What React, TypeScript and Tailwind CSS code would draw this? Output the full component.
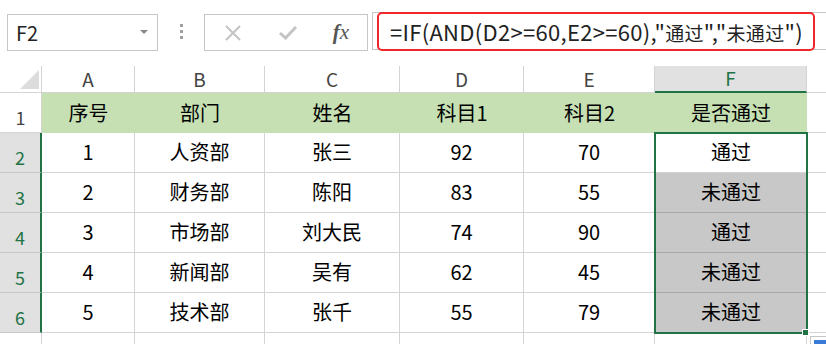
import React from 'react';

const FONT = { fontFamily: '"Noto Sans CJK SC", "Liberation Sans", sans-serif' };

const COLUMNS = ['A', 'B', 'C', 'D', 'E', 'F'];

const HEADER_ROW = ['序号', '部门', '姓名', '科目1', '科目2', '是否通过'];

const DATA_ROWS = [
  ['1', '人资部', '张三', '92', '70', '通过'],
  ['2', '财务部', '陈阳', '83', '55', '未通过'],
  ['3', '市场部', '刘大民', '74', '90', '通过'],
  ['4', '新闻部', '吴有', '62', '45', '未通过'],
  ['5', '技术部', '张千', '55', '79', '未通过'],
];

const FormulaBar: React.FC = () => (
  <div className="flex h-[66px] items-start pt-[12px]">
    <div className="ml-[7px] mt-[2px] flex h-[37px] w-[151px] items-center justify-between border border-[#c6c6c6] bg-white pl-[8px] pr-[9px]">
      <span className="text-[20px] text-[#222]">F2</span>
      <svg width="8" height="5" viewBox="0 0 8 5">
        <polygon points="0,0 8,0 4,4" fill="#8a8a8a" />
      </svg>
    </div>
    <div className="flex h-[39px] w-[46px] flex-col items-center justify-center gap-[3px]">
      <span className="h-[3px] w-[3px] bg-[#a0a0a0]" />
      <span className="h-[3px] w-[3px] bg-[#a0a0a0]" />
      <span className="h-[3px] w-[3px] bg-[#a0a0a0]" />
    </div>
    <div className="mt-[2px] flex h-[37px] w-[164px] items-center border border-[#c6c6c6] bg-white">
      <div className="flex w-[55px] justify-center">
        <svg width="16" height="16" viewBox="0 0 16 16">
          <path d="M1 1 L15 15 M15 1 L1 15" stroke="#c4c4c4" strokeWidth="2" fill="none" />
        </svg>
      </div>
      <div className="flex w-[55px] justify-center">
        <svg width="18" height="14" viewBox="0 0 18 14">
          <path d="M1 7 L6.5 12 L17 1" stroke="#c4c4c4" strokeWidth="3" fill="none" />
        </svg>
      </div>
      <div className="flex w-[52px] justify-center">
        <span
          className="text-[21px] italic text-[#555]"
          style={{ fontFamily: '"Liberation Serif", serif' }}
        >
          <span className="font-bold">f</span>x
        </span>
      </div>
    </div>
    <div className="ml-[4px] flex h-[38px] flex-1 items-center border-y border-l border-[#c6c6c6] bg-white pl-[4px]">
      <div className="flex h-[39px] w-[438px] items-center rounded-[5px] border-2 border-[#f0262a] pl-[11px]">
        <span className="whitespace-nowrap text-[22px] leading-none tracking-[0.3px] text-[#222]">
          =IF(AND(D2&gt;=60,E2&gt;=60),"<span className="text-[19px]">通过</span>","
          <span className="text-[19px]">未通过</span>")
        </span>
      </div>
    </div>
  </div>
);

const App: React.FC = () => {
  return (
    <div className="relative h-[344px] w-[826px] overflow-hidden bg-white" style={FONT}>
      <FormulaBar />

      <div className="grid grid-cols-[42px_93px_130px_135px_124px_131px_152px_1fr] grid-rows-[27px_40px_40px_40px_40px_40px_40px_11px]">
        {/* column headers */}
        <div className="flex items-end justify-end border-r border-b border-[#d4d4d4] bg-white pb-[3px] pr-[2px]">
          <svg width="19" height="19" viewBox="0 0 19 19">
            <polygon points="19,0 19,19 0,19" fill="#dcdcdc" />
          </svg>
        </div>
        {COLUMNS.map((col) =>
          col === 'F' ? (
            <div
              key={col}
              className="flex items-center justify-center border-r border-b-2 border-r-[#d4d4d4] border-b-[#217346] bg-[#e1e1e1] text-[19px] text-[#217346]"
            >
              {col}
            </div>
          ) : (
            <div
              key={col}
              className="flex items-center justify-center border-r border-b border-[#d4d4d4] bg-white text-[19px] text-[#444]"
            >
              {col}
            </div>
          ),
        )}
        <div className="border-b border-[#d4d4d4] bg-white" />

        {/* row 1 */}
        <div className="flex items-end justify-center border-r border-b border-[#d4d4d4] bg-white pb-[1px] text-[18px] text-[#444]">
          1
        </div>
        {HEADER_ROW.map((text, i) => (
          <div
            key={i}
            className="flex items-center justify-center bg-[#c6e0b4] text-[20px] text-black"
          >
            {text}
          </div>
        ))}
        <div className="border-b border-[#d4d4d4]" />

        {/* data rows */}
        {DATA_ROWS.map((row, r) => (
          <React.Fragment key={r}>
            <div className="flex items-end justify-center border-r-2 border-b border-r-[#217346] border-b-[#c8c8c8] bg-[#e1e1e1] pb-[1px] text-[18px] text-[#217346]">
              {r + 2}
            </div>
            {row.map((text, c) =>
              c === 5 ? (
                <div
                  key={c}
                  className={
                    r === 0
                      ? 'flex items-center justify-center border-b border-[#d4d4d4] bg-white pb-[2px] text-[20px] text-black'
                      : 'flex items-center justify-center border-b border-[#a8a8a8] bg-[#c8c8c8] pb-[2px] text-[20px] text-black'
                  }
                >
                  {text}
                </div>
              ) : (
                <div
                  key={c}
                  className="flex items-center justify-center border-r border-b border-[#d4d4d4] pb-[2px] text-[20px] text-black"
                >
                  {text}
                </div>
              ),
            )}
            <div className="border-b border-l border-[#d4d4d4]" />
          </React.Fragment>
        ))}

        {/* partial row 7 */}
        <div className="border-r border-[#d4d4d4] bg-white" />
        {COLUMNS.map((col) => (
          <div key={col} className="border-r border-[#d4d4d4]" />
        ))}
        <div />
      </div>

      {/* selection F2:F6 */}
      <div className="pointer-events-none absolute left-[654px] top-[132px] h-[202px] w-[154px] border-2 border-[#217346]" />
      <div className="absolute left-[802px] top-[329px] h-[7px] w-[7px] border border-white bg-[#217346]" />

      {/* quick analysis button */}
      <div className="absolute left-[810px] top-[336px] h-[10px] w-[18px] border border-[#c6c6c6] bg-white pl-[3px] pt-[3px]">
        <div className="h-[6px] w-[12px] bg-[#3a7ad8]" />
      </div>
    </div>
  );
};

export default App;
